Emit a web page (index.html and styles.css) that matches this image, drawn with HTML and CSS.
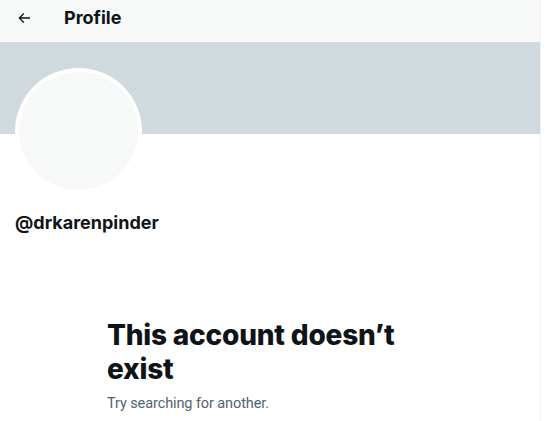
FILE: index.html
```html
<!DOCTYPE html>
<html lang="en">
<head>
<meta charset="utf-8">
<title>Profile</title>
<link rel="stylesheet" href="styles.css">
</head>
<body>
<main class="column">
  <header class="topbar">
    <button class="back" aria-label="Back">
      <svg viewBox="0 0 24 24" width="16" height="16"><path d="M7.414 13l5.043 5.04-1.414 1.42L3.586 12l7.457-7.46 1.414 1.42L7.414 11H21v2H7.414z" fill="#0f1419"/></svg>
    </button>
    <h1 class="title">Profile</h1>
  </header>
  <div class="banner"></div>
  <div class="profile">
    <div class="avatar"></div>
    <div class="handle">@drkarenpinder</div>
  </div>
  <section class="empty">
    <h2 class="empty-title">This account doesn’t exist</h2>
    <p class="empty-text">Try searching for another.</p>
  </section>
</main>
</body>
</html>
```
FILE: styles.css
```css
html, body {
  margin: 0;
  padding: 0;
  background: #ffffff;
}
body {
  font-family: Inter, "Noto Sans", sans-serif;
  color: #0f1419;
  overflow: hidden;
}
.column {
  width: 540px;
  min-height: 421px;
  border-right: 1px solid #eff3f4;
}
.topbar {
  height: 42px;
  background: #f7f9f9;
  display: flex;
  align-items: center;
  padding: 0 0 6px 15px;
  box-sizing: border-box;
}
.back {
  border: 0;
  background: none;
  padding: 0;
  width: 18px;
  height: 18px;
  display: flex;
  align-items: center;
  justify-content: center;
  margin-right: 31px;
}
.title {
  margin: 0;
  font-size: 18px;
  font-weight: 700;
  line-height: 20px;
}
.banner {
  height: 92px;
  background: #cfd9de;
}
.profile {
  padding: 0 15px;
}
.avatar {
  width: 119px;
  height: 118px;
  border: 4px solid #ffffff;
  border-radius: 50%;
  background: #f7f9f9;
  margin-top: -66px;
}
.handle {
  margin-top: 18px;
  font-size: 18px;
  font-weight: 700;
  line-height: 22px;
}
.empty {
  width: 336px;
  margin: 84px 0 0 107px;
}
.empty-title {
  margin: 0;
  font-size: 28px;
  font-weight: 800;
  line-height: 34px;
  letter-spacing: -0.2px;
}
.empty-text {
  margin: 9px 0 0;
  font-family: Roboto, Inter, sans-serif;
  font-size: 14.5px;
  letter-spacing: -0.1px;
  line-height: 18px;
  color: #536471;
}
```
